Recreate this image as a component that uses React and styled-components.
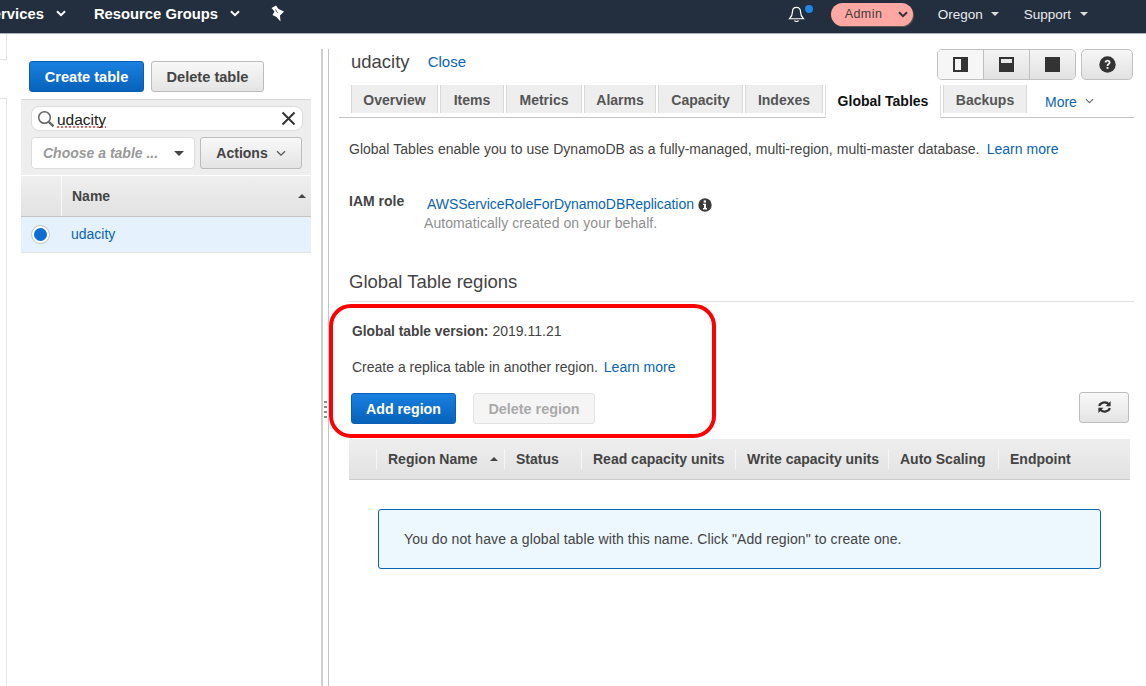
import React from 'react';
import styled, { createGlobalStyle } from 'styled-components';

const Global = createGlobalStyle`
  html, body { margin: 0; padding: 0; background: #fff; }
  body { font-family: "Liberation Sans", Arial, sans-serif; font-size: 14px; color: #444; }
`;
const Page = styled.div`
  width: 1146px; height: 686px; overflow: hidden; display: flex; flex-direction: column; position: relative; background: #fff;
`;
const Nav = styled.header`
  height: 33px; flex: none; background: #232f3e; border-bottom: 1px solid #aab0b7; display: flex; align-items: center; color: #fff;
`;
const NavLeft = styled.div`
  display: flex; align-items: center; margin-left: -17px; margin-top: -6px; font-weight: bold; font-size: 14.8px;
`;
const NavItem = styled.span`
  display: flex; align-items: center; margin-right: ${p => p.$mr}px; gap: ${p => p.$gap}px; white-space: nowrap;
`;
const NavRight = styled.div`
  margin-left: auto; display: flex; align-items: center; margin-top: -5px; font-size: 13.5px; color: #eaecee;
`;
const BellWrap = styled.span`
  position: relative; width: 24px; height: 20px; display: block; margin-right: 19px;
`;
const Dot = styled.i`
  position: absolute; right: -1px; top: 1px; width: 8px; height: 8px; border-radius: 50%; background: #1f86e8;
`;
const AdminPill = styled.span`
  width: 82px; height: 23px; box-sizing: border-box; border-radius: 12px; background: #ffa8a3; color: #3c3c3c; box-shadow: 1px 1px 0 #5a5550; font-size: 12.5px;
  display: flex; align-items: center; justify-content: space-between; padding: 0 5px 0 14px; margin-right: 25px; letter-spacing: .45px;
`;
const Body = styled.div`
  flex: 1; display: flex; min-height: 0;
`;
const Stub = styled.aside`
  width: 7px; flex: none; display: flex; flex-direction: column;
`;
const StubTop = styled.div`
  height: 25px; border-right: 1px solid #e4e4e4; border-bottom: 1px solid #e4e4e4;
`;
const StubBottom = styled.div`
  flex: 1; margin-top: 38px; border-right: 1px solid #e4e4e4; border-top: 1px solid #e4e4e4;
`;
const LeftPanel = styled.section`
  width: 290px; margin-left: 14px; flex: none; display: flex; flex-direction: column;
`;
const LeftActions = styled.div`
  display: flex; gap: 7px; padding: 27px 0 0 8px; height: 31px;
`;
const Button = styled.button`
  box-sizing: border-box; width: ${p => p.$w}px; height: ${p => p.$h || 31}px; padding: 0; border-radius: 3px;
  font: bold ${p => p.$fs || 14}px "Liberation Sans", Arial, sans-serif;
  display: flex; align-items: center; justify-content: center; gap: 8px; flex: none;
  color: ${p => p.$primary ? '#fff' : p.$disabled ? '#aaa' : '#444'};
  border: 1px solid ${p => p.$primary ? '#0a5fb4' : p.$disabled ? '#e2e2e2' : '#bcbcbc'};
  background: ${p => p.$primary ? 'linear-gradient(#1a80e0,#0762ba)' : p.$disabled ? '#f5f5f5' : 'linear-gradient(#f8f8f8,#e4e4e4)'};
`;
const FilterBox = styled.div`
  height: 76px; margin-top: 7px; background: #eee; border-top: 1px solid #d8d8d8; box-sizing: border-box; padding: 6px 8px 0 10px; display: flex; flex-direction: column; gap: 6px;
`;
const SearchField = styled.div`
  box-sizing: border-box; height: 25px; width: 272px; background: #fff; border: 1px solid #dcdcdc; border-radius: 8px; display: flex; align-items: center; padding: 0 6px 0 5px; color: #222; font-size: 15.5px;
`;
const SearchText = styled.span`
  flex: 1; margin-left: 2px; padding-top: 2px;
`;
const SearchWord = styled.span`
  text-decoration: underline dotted #e33; text-underline-offset: 2px; text-decoration-skip-ink: none;
`;
const FilterRow = styled.div`
  display: flex; gap: 5px;
`;
const SelectField = styled.div`
  box-sizing: border-box; width: 164px; height: 32px; background: #fff; border: 1px solid #dcdcdc; border-radius: 4px; display: flex; align-items: center; justify-content: space-between; padding: 0 10px 0 11px;
  color: #999; font-weight: bold; font-style: italic; font-size: 14px; white-space: nowrap;
`;
const Caret = styled.i`
  width: 0; height: 0; flex: none; display: block;
  border-left: ${p => p.$s || 5}px solid transparent; border-right: ${p => p.$s || 5}px solid transparent;
  ${p => p.$up ? `border-bottom: 4px solid ${p.$c || '#444'};` : `border-top: ${p.$s || 5}px solid ${p.$c || '#444'};`}
`;
const TableHead = styled.div`
  height: 42px; box-sizing: border-box; display: flex; background: linear-gradient(#efefef,#e2e2e2); border-bottom: 1px solid #c4c4c4; border-top: 1px solid #fff; font-weight: bold; color: #444;
`;
const RadioCol = styled.div`
  width: 40px; flex: none; border-right: 1px solid #fafafa;
`;
const NameCol = styled.div`
  flex: 1; display: flex; align-items: center; justify-content: space-between; padding: 0 5px 1px 10px;
`;
const SelectedRow = styled.div`
  height: 36px; box-sizing: border-box; background: #e5f1fc; border-bottom: 1px solid #dfe3e6; padding-bottom: 1px; display: flex; align-items: center; color: #0a64b4; font-size: 14px;
`;
const Radio = styled.span`
  width: 19px; height: 19px; box-sizing: border-box; border-radius: 50%; background: #fff; border: 1px solid #c6c6c6; display: flex; align-items: center; justify-content: center; margin: 0 21px 0 10px; flex: none;
  &::after { content: ''; width: 13px; height: 13px; border-radius: 50%; background: #0a6ed2; }
`;
const Splitter = styled.div`
  width: 5px; flex: none; margin: 15px 0 0 10px; position: relative; border-left: 2px solid #cfcfcf; border-right: 1px solid #c4c4c4;
`;
const Grip = styled.div`
  position: absolute; left: 1px; top: 352px; width: 3px; height: 20px;
  background: linear-gradient(#8a8a8a 2px, transparent 2px) 0 0 / 3px 5px;
`;
const Main = styled.main`
  flex: 1; min-width: 0; padding: 0 12px 0 10px;
`;
const Content = styled.div`
  padding-left: 10px;
`;
const TitleRow = styled.div`
  display: flex; align-items: center; height: 51px; padding-left: 12px; box-sizing: border-box;
`;
const Title = styled.h1`
  margin: 4px 18px 0 0; font-weight: normal; font-size: 18.5px; color: #444;
`;
const A = styled.a`
  color: #0a64b4; font-size: ${p => p.$s || 14}px; margin-left: ${p => p.$ml || 0}px; white-space: nowrap;
`;
const CloseLink = styled(A)`
  margin-top: 4px;
`;
const ViewTools = styled.div`
  margin-left: auto; margin-top: 10px; display: flex; gap: 5px; align-items: center; margin-right: 1px;
`;
const Seg = styled.div`
  display: flex; height: 31px; box-sizing: border-box; border: 1px solid #c0c0c0; border-radius: 5px; overflow: hidden;
`;
const SegBtn = styled.span`
  width: 45px; display: flex; align-items: center; justify-content: center; border-left: ${p => p.$first ? 0 : '1px solid #c0c0c0'};
  background: ${p => p.$active ? '#f6f6f6' : 'linear-gradient(#f4f4f4,#e2e2e2)'};
`;
const HelpBtn = styled.span`
  width: 52px; height: 31px; box-sizing: border-box; border: 1px solid #c0c0c0; border-radius: 5px; background: linear-gradient(#f6f6f6,#e2e2e2); display: flex; align-items: center; justify-content: center;
`;
const Tabs = styled.nav`
  height: 33px; box-sizing: border-box; border-bottom: 1px solid #c4c4c4; display: flex; align-items: flex-start; padding-left: 12px; gap: 2px;
`;
const Tab = styled.span`
  box-sizing: border-box; height: ${p => p.$active ? '33px' : '28px'}; display: flex; align-items: center; font-weight: bold; white-space: nowrap; width: ${p => p.$w}px; justify-content: center;
  background: ${p => p.$active ? '#fff' : '#eee'}; color: ${p => p.$active ? '#111' : '#555'};
  border-left: 1px solid ${p => p.$active ? '#ddd' : '#d8d8d8'}; border-right: 1px solid ${p => p.$active ? '#ddd' : '#d8d8d8'};
  padding-bottom: ${p => p.$active ? 2 : 0}px; padding-top: ${p => p.$active ? 0 : 1}px;
`;
const MoreTab = styled.span`
  display: flex; align-items: center; gap: 8px; margin-left: 16px; color: #0a64b4; height: 33px;
`;
const Intro = styled.p`
  margin: 23px 0 0; height: 17px; line-height: 17px; white-space: nowrap; word-spacing: .23px;
`;
const RoleGrid = styled.div`
  display: flex; margin-top: 35px; height: 40px;
`;
const RoleLabel = styled.strong`
  width: 78px; flex: none; line-height: 17px;
`;
const RoleBody = styled.div`
  display: flex; flex-direction: column; gap: 2px; line-height: 17px; padding-top: 3px;
`;
const RoleLine = styled.div`
  display: flex; align-items: center; gap: 4px; letter-spacing: -.05px;
`;
const Muted = styled.div`
  color: #8f8f8f; margin-left: -3px; letter-spacing: .08px;
`;
const Section = styled.h2`
  margin: 39px 0 0; height: 29px; font-weight: normal; font-size: 18.5px; line-height: 19px; border-bottom: 1px solid #e2e2e2; color: #444;
`;
const Version = styled.div`
  margin: 21px 0 0 3px; line-height: 17px;
`;
const Bold = styled.b`
  margin-right: 4px; font-size: 13.8px;
`;
const Replica = styled.div`
  margin: 19px 0 0 3px; line-height: 17px;
`;
const ActionRow = styled.div`
  display: flex; gap: 17px; margin: 17px 0 0 2px; align-items: center; height: 31px;
`;
const Refresh = styled(Button)`
  margin: 0 5px 3px auto;
`;
const RegionHead = styled.div`
  margin: 15px 4px 0 0; height: 41px; box-sizing: border-box; display: flex; align-items: center; background: linear-gradient(#eee,#e2e2e2); border-bottom: 1px solid #ccc; font-weight: bold; color: #444; padding-left: 27px;
`;
const RegionCol = styled.span`
  width: ${p => p.$w}px; height: 20px; box-sizing: border-box; flex: none; border-left: 1px solid #f6f6f6; padding-left: 11px; display: flex; align-items: center; gap: 13px; white-space: nowrap;
`;
const Notice = styled.div`
  box-sizing: border-box; margin: 29px 33px 0 29px; height: 60px; border: 1px solid #0a64b4; border-radius: 3px; background: #ecf7fe; display: flex; align-items: center; padding-left: 25px; color: #444; letter-spacing: .09px;
`;
const Ring = styled.div`
  position: absolute; left: 329px; top: 304px; width: 387px; height: 134px; box-sizing: border-box; border: 4px solid #f00; border-radius: 22px; pointer-events: none;
`;

const Chevron = ({ size = 10, color = 'currentColor', w = 2 }) => (
  <svg width={size} height={size * 0.7} viewBox="0 0 10 7" fill="none"><path d="M1 1.2 5 5.2 9 1.2" stroke={color} strokeWidth={w} /></svg>
);
const Pin = () => (
  <svg width="16" height="17" viewBox="0 0 16 17" style={{ flex: 'none' }}>
    <path fill="#fff" d="M1.5 3 6 .5 8.5 4 14 6.5 10 10.5 10.5 16.5 6.5 12 2.5 10 4.5 6.5z" />
    <path fill="none" stroke="#232f3e" strokeWidth=".8" d="M5.5 4.5 7.5 7.8" />
  </svg>
);
const Bell = () => (
  <svg width="17" height="17" viewBox="0 0 18 18" fill="none" stroke="#fff" strokeWidth="1.3" style={{ display: 'block', marginTop: 2 }}>
    <path d="M9 1.5c-2.8 0-4.3 2-4.3 4.8 0 3.7-1.6 5.6-3 7.2h14.6c-1.4-1.6-3-3.5-3-7.2C13.3 3.5 11.8 1.5 9 1.5z" /><path d="M7 15.2c.3 1.6 3.7 1.6 4 0" />
  </svg>
);
const SearchIcon = () => (
  <svg width="18" height="18" viewBox="0 0 18 18" fill="none" stroke="#666" style={{ flex: 'none' }}>
    <circle cx="7.5" cy="7.5" r="5.8" strokeWidth="1.5" /><path d="M11.8 11.8 16.5 16.3" strokeWidth="2.4" />
  </svg>
);
const XIcon = () => (
  <svg width="15" height="15" viewBox="0 0 15 15" stroke="#333" strokeWidth="2" style={{ flex: 'none' }}><path d="M1.5 1.5 13.5 13.5M13.5 1.5 1.5 13.5" /></svg>
);
const PaneIcon = ({ kind }) => (
  <svg width="15" height="15" viewBox="0 0 15 15" style={{ display: 'block' }}>
    <rect width="15" height="15" fill="#333" />
    {kind === 'left' && <rect x="2" y="2" width="6" height="11" fill="#f4f4f4" />}
    {kind === 'bottom' && <rect x="2" y="2" width="11" height="4" fill="#e8e8e8" />}
  </svg>
);
const Help = () => (
  <svg width="17" height="17" viewBox="0 0 17 17"><circle cx="8.5" cy="8.5" r="8.2" fill="#333" />
    <path d="M5.6 6.4c.1-3.4 5.9-3.4 5.9 0 0 2-2.2 2-2.2 3.6H7.6c0-2.5 2-2.3 2-3.6 0-1.2-2-1.2-2.1.2z" fill="#f0f0f0" /><rect x="7.6" y="11" width="1.8" height="1.9" fill="#f0f0f0" /></svg>
);
const Info = () => (
  <svg width="14" height="14" viewBox="0 0 14 14"><circle cx="7" cy="7" r="6.7" fill="#3b3b3b" /><rect x="5.7" y="2.4" width="2.3" height="2.2" fill="#fff" /><path d="M5 5.8h3v4.3h1v1.3H5v-1.3h1V7.1H5z" fill="#fff" /></svg>
);
const RefreshIcon = () => (
  <svg width="15" height="14" viewBox="0 0 15 14" fill="none" stroke="#333" strokeWidth="2.2">
    <path d="M2.2 6C3 2.8 8.6.6 12 4.4" /><path d="M13.6 1v5.2H8.6" fill="#333" stroke="none" /><path d="M12.8 8C12 11.2 6.4 13.4 3 9.6" /><path d="M1.4 13V7.8h5" fill="#333" stroke="none" />
  </svg>
);

const tabs = [['Overview', 87], ['Items', 64], ['Metrics', 76], ['Alarms', 72], ['Capacity', 85], ['Indexes', 78]];
const cols = [['Region Name', 128, true], ['Status', 77], ['Read capacity units', 154], ['Write capacity units', 153], ['Auto Scaling', 110], ['Endpoint', 90]];

export default function App() {
  return (
    <Page>
      <Global />
      <Nav>
        <NavLeft>
          <NavItem $mr={28} $gap={12}>Services <Chevron /></NavItem>
          <NavItem $mr={30} $gap={12}>Resource Groups <Chevron /></NavItem>
          <Pin />
        </NavLeft>
        <NavRight>
          <BellWrap><Bell /><Dot /></BellWrap>
          <AdminPill>Admin <Chevron size={10} color="#333" /></AdminPill>
          <NavItem $mr={25} $gap={8}>Oregon <Caret $s={4} $c="#ddd" /></NavItem>
          <NavItem $mr={58} $gap={9}>Support <Caret $s={4} $c="#ddd" /></NavItem>
        </NavRight>
      </Nav>
      <Body>
        <Stub><StubTop /><StubBottom /></Stub>
        <LeftPanel>
          <LeftActions>
            <Button $primary $w={115} $fs={14.6}>Create table</Button>
            <Button $w={113} $fs={14.6}>Delete table</Button>
          </LeftActions>
          <FilterBox>
            <SearchField>
              <SearchIcon />
              <SearchText><SearchWord>udacity</SearchWord></SearchText>
              <XIcon />
            </SearchField>
            <FilterRow>
              <SelectField>Choose a table ... <Caret /></SelectField>
              <Button $w={102} $h={32}>Actions <Chevron size={10} color="#555" w={1.3} /></Button>
            </FilterRow>
          </FilterBox>
          <TableHead>
            <RadioCol />
            <NameCol>Name <Caret $s={4} $up /></NameCol>
          </TableHead>
          <SelectedRow><Radio />udacity</SelectedRow>
        </LeftPanel>
        <Splitter><Grip /></Splitter>
        <Main>
          <TitleRow>
            <Title>udacity</Title>
            <CloseLink $s={15}>Close</CloseLink>
            <ViewTools>
              <Seg>
                <SegBtn $first $active><PaneIcon kind="left" /></SegBtn>
                <SegBtn><PaneIcon kind="bottom" /></SegBtn>
                <SegBtn><PaneIcon kind="full" /></SegBtn>
              </Seg>
              <HelpBtn><Help /></HelpBtn>
            </ViewTools>
          </TitleRow>
          <Tabs>
            {tabs.map(([t, w]) => <Tab key={t} $w={w}>{t}</Tab>)}
            <Tab $active $w={116}>Global Tables</Tab>
            <Tab $w={84}>Backups</Tab>
            <MoreTab>More <Chevron size={9} color="#666" w={1.2} /></MoreTab>
          </Tabs>
          <Content>
            <Intro>Global Tables enable you to use DynamoDB as a fully-managed, multi-region, multi-master database. <A $ml={3}>Learn more</A></Intro>
            <RoleGrid>
              <RoleLabel>IAM role</RoleLabel>
              <RoleBody>
                <RoleLine><A>AWSServiceRoleForDynamoDBReplication</A><Info /></RoleLine>
                <Muted>Automatically created on your behalf.</Muted>
              </RoleBody>
            </RoleGrid>
            <Section>Global Table regions</Section>
            <Version><Bold>Global table version:</Bold>2019.11.21</Version>
            <Replica>Create a replica table in another region. <A $ml={2}>Learn more</A></Replica>
            <ActionRow>
              <Button $primary $w={105} $fs={14.2}>Add region</Button>
              <Button $disabled $w={122} $fs={14.4}>Delete region</Button>
              <Refresh $w={50}><RefreshIcon /></Refresh>
            </ActionRow>
            <RegionHead>
              {cols.map(([t, w, s]) => <RegionCol key={t} $w={w}>{t}{s && <Caret $s={4} $up />}</RegionCol>)}
            </RegionHead>
            <Notice>You do not have a global table with this name. Click "Add region" to create one.</Notice>
          </Content>
        </Main>
      </Body>
      <Ring />
    </Page>
  );
}
